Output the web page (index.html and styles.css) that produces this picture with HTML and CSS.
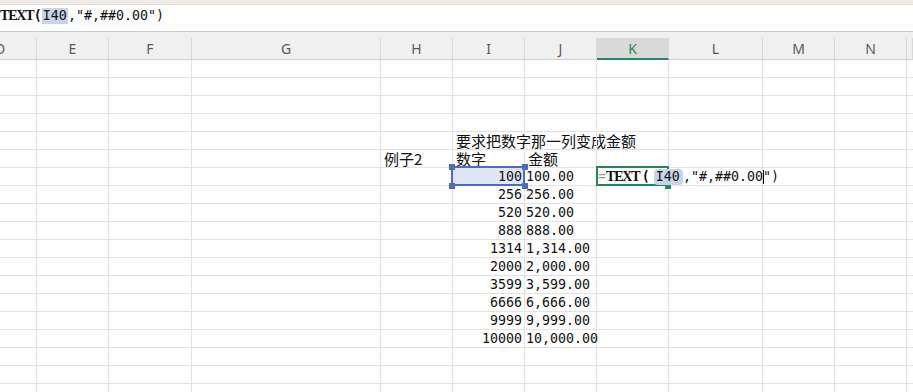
FILE: index.html
```html
<!DOCTYPE html>
<html lang="zh-CN">
<head>
    <meta charset="UTF-8">
    <title>Sheet</title>
    <link rel="stylesheet" href="styles.css">
</head>
<body>

    <div class="top-strip"></div>

    <!-- Formula bar -->
    <div class="formula-bar">
        <div class="formula-text"><span class="eq">=</span><b class="fn">TEXT</b><b class="paren">(</b><span class="ref">I40</span>,"#,##0.00")</div>
    </div>

    <!-- Column headers -->
    <div class="col-head">
        <div class="first">D</div><div>E</div><div>F</div><div>G</div><div>H</div><div>I</div><div>J</div><div class="current">K</div><div>L</div><div>M</div><div>N</div><div></div>
    </div>

    <!-- Rows 34 - 52 -->
    <div class="sheet">
        <div class="row"><div></div><div></div><div></div><div></div><div></div><div></div><div></div><div></div><div></div><div></div><div></div><div></div></div>
        <div class="row"><div></div><div></div><div></div><div></div><div></div><div></div><div></div><div></div><div></div><div></div><div></div><div></div></div>
        <div class="row"><div></div><div></div><div></div><div></div><div></div><div></div><div></div><div></div><div></div><div></div><div></div><div></div></div>
        <div class="row"><div></div><div></div><div></div><div></div><div></div><div></div><div></div><div></div><div></div><div></div><div></div><div></div></div>
        <div class="row"><div></div><div></div><div></div><div></div><div></div><div class="txt">要求把数字那一列变成金额</div><div></div><div></div><div></div><div></div><div></div><div></div></div>
        <div class="row"><div></div><div></div><div></div><div></div><div class="txt">例子2</div><div class="txt">数字</div><div class="txt">金额</div><div></div><div></div><div></div><div></div><div></div></div>
        <div class="row">
            <div></div><div></div><div></div><div></div><div></div>
            <div class="num right selected">100<span class="sel-box"></span><span class="handle tl"></span><span class="handle tr"></span><span class="handle bl"></span><span class="handle br"></span></div>
            <div class="num">100.00</div>
            <div class="active">
                <span class="edit-box"></span>
                <span class="fill-handle"></span>
                <div class="edit-text"><span class="eq">=</span><b class="fn">TEXT</b><b class="paren">(</b><span class="ref">I40</span>,"#,##0.00<i class="caret"></i>")</div>
            </div>
            <div></div><div></div><div></div><div></div>
        </div>
        <div class="row"><div></div><div></div><div></div><div></div><div></div><div class="num right">256</div><div class="num">256.00</div><div></div><div></div><div></div><div></div><div></div></div>
        <div class="row"><div></div><div></div><div></div><div></div><div></div><div class="num right">520</div><div class="num">520.00</div><div></div><div></div><div></div><div></div><div></div></div>
        <div class="row"><div></div><div></div><div></div><div></div><div></div><div class="num right">888</div><div class="num">888.00</div><div></div><div></div><div></div><div></div><div></div></div>
        <div class="row"><div></div><div></div><div></div><div></div><div></div><div class="num right">1314</div><div class="num">1,314.00</div><div></div><div></div><div></div><div></div><div></div></div>
        <div class="row"><div></div><div></div><div></div><div></div><div></div><div class="num right">2000</div><div class="num">2,000.00</div><div></div><div></div><div></div><div></div><div></div></div>
        <div class="row"><div></div><div></div><div></div><div></div><div></div><div class="num right">3599</div><div class="num">3,599.00</div><div></div><div></div><div></div><div></div><div></div></div>
        <div class="row"><div></div><div></div><div></div><div></div><div></div><div class="num right">6666</div><div class="num">6,666.00</div><div></div><div></div><div></div><div></div><div></div></div>
        <div class="row"><div></div><div></div><div></div><div></div><div></div><div class="num right">9999</div><div class="num">9,999.00</div><div></div><div></div><div></div><div></div><div></div></div>
        <div class="row"><div></div><div></div><div></div><div></div><div></div><div class="num right">10000</div><div class="num">10,000.00</div><div></div><div></div><div></div><div></div><div></div></div>
        <div class="row"><div></div><div></div><div></div><div></div><div></div><div></div><div></div><div></div><div></div><div></div><div></div><div></div></div>
        <div class="row"><div></div><div></div><div></div><div></div><div></div><div></div><div></div><div></div><div></div><div></div><div></div><div></div></div>
        <div class="row"><div></div><div></div><div></div><div></div><div></div><div></div><div></div><div></div><div></div><div></div><div></div><div></div></div>
    </div>

</body>
</html>
```

FILE: styles.css
```css
:root {
    --cols: 37px 72px 83px 189px 72px 72px 72px 72px 94px 72px 72px 1fr;
    --grid: #e2e2e2;
    --green: #1f8a5a;
    --blue: #4a6cc6;
}

body {
    margin: 0;
    width: 913px;
    height: 392px;
    overflow: hidden;
    background: #ffffff;
    color: #111111;
    font-family: "Noto Sans CJK SC", sans-serif;
}

.top-strip {
    height: 4px;
    background: #f3ebe7;
    border-bottom: 1px solid #e4dcd8;
}

/* Formula bar */
.formula-bar {
    height: 27px;
    padding-bottom: 5px;
    box-sizing: border-box;
    border-bottom: 1px solid #c9c9c9;
    display: flex;
    align-items: center;
    overflow: hidden;
}

.formula-text,
.edit-text {
    font-family: "DejaVu Sans Mono", monospace;
    font-size: 13.3px;
    white-space: nowrap;
    color: #111111;
}

.formula-text {
    margin-left: -8px;
}

.fn {
    font-family: "Liberation Serif", serif;
    font-size: 14px;
    font-weight: bold;
    letter-spacing: -1.2px;
    padding-right: 0.5px;
}

.paren {
    display: inline-block;
    width: 8px;
    text-align: left;
}

.ref {
    display: inline-block;
    background: #c9d3ec;
    padding: 0 1px;
    line-height: 16px;
}

.eq {
    color: #9a9a9a;
}

/* Column headers */
.col-head {
    display: grid;
    grid-template-columns: var(--cols);
    padding-top: 6px;
    background: #f0f0f0;
}

.col-head div {
    height: 22px;
    box-sizing: border-box;
    border-right: 1px solid #d8d8d8;
    border-bottom: 1px solid #d2d2d2;
    text-align: center;
    font-family: "Noto Sans", sans-serif;
    font-size: 14px;
    line-height: 21px;
    color: #5a5a5a;
}

.col-head .first {
    text-align: left;
    text-indent: -5px;
    overflow: hidden;
}

.col-head .current {
    background: #d9d9d9;
    color: var(--green);
    border-bottom: 2px solid var(--green);
}

/* Cells */
.row {
    display: grid;
    grid-template-columns: var(--cols);
}

.row > div {
    height: 18px;
    box-sizing: border-box;
    border-right: 1px solid var(--grid);
    border-bottom: 1px solid var(--grid);
    padding: 0 3px;
    white-space: nowrap;
    line-height: 17px;
}

.row .txt {
    font-size: 15px;
}

.row .num {
    font-family: "DejaVu Sans Mono", monospace;
    font-size: 13.3px;
    padding-left: 1px;
}

.row .right {
    text-align: right;
    padding-right: 2px;
}

/* Selected cell I40 */
.selected {
    position: relative;
    background: #dfe5f5;
}

.sel-box {
    position: absolute;
    left: -2px;
    right: -1px;
    top: -2px;
    bottom: -1px;
    border: 2px solid var(--blue);
}

.handle {
    position: absolute;
    width: 6px;
    height: 6px;
    background: var(--blue);
}

.handle.tl { left: -4px; top: -4px; }
.handle.tr { right: -4px; top: -4px; }
.handle.bl { left: -4px; bottom: -4px; }
.handle.br { right: -4px; bottom: -4px; }

/* Active cell in edit mode */
.active {
    position: relative;
}

.edit-box {
    position: absolute;
    left: -1px;
    right: -1px;
    top: -2px;
    bottom: -1px;
    border: 2px solid var(--green);
}

.fill-handle {
    position: absolute;
    right: -3px;
    bottom: -4px;
    width: 6px;
    height: 5px;
    background: var(--green);
}

.edit-text {
    position: absolute;
    left: 1px;
    top: 0;
    line-height: 17px;
    z-index: 2;
}

.edit-text .paren {
    width: 14px;
    padding-left: 2px;
    box-sizing: border-box;
}

.edit-text .ref {
    border-radius: 4px;
    padding: 0 3px 0 2px;
}

.caret {
    display: inline-block;
    width: 1px;
    height: 14px;
    background: #000000;
    vertical-align: middle;
    margin-right: -1px;
}
```
